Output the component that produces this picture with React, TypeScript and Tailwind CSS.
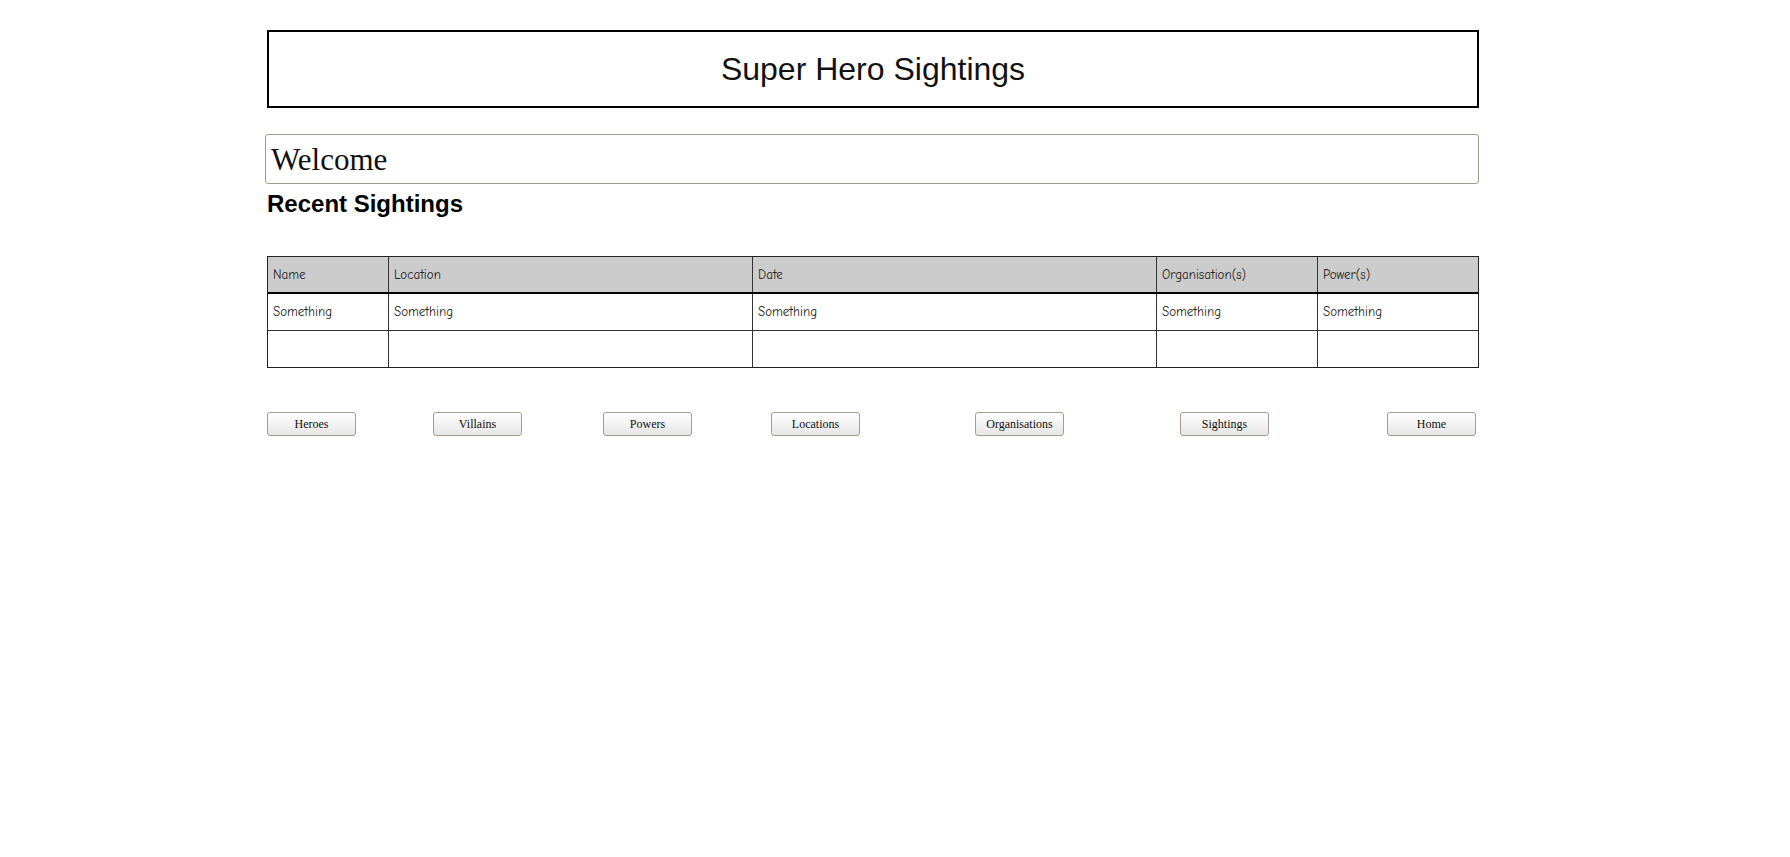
import React from 'react';

const columns = [
  { label: 'Name', width: 'w-[121px]' },
  { label: 'Location', width: 'w-[364px]' },
  { label: 'Date', width: 'w-[404px]' },
  { label: 'Organisation(s)', width: 'w-[161px]' },
  { label: 'Power(s)', width: 'flex-1' },
];

const navButtons = [
  { label: 'Heroes', ml: 'ml-0' },
  { label: 'Villains', ml: 'ml-[77px]' },
  { label: 'Powers', ml: 'ml-[81px]' },
  { label: 'Locations', ml: 'ml-[79px]' },
  { label: 'Organisations', ml: 'ml-[115px]' },
  { label: 'Sightings', ml: 'ml-[116px]' },
  { label: 'Home', ml: 'ml-[118px]' },
];

const sketchFont = "font-['Comic_Sans_MS','Comic_Neue','Open_Sans',sans-serif]";

function TableRow({ cells, header }: { cells: string[]; header?: boolean }) {
  return (
    <div
      className={`flex h-[37px] ${
        header ? 'bg-[#cccccc] border-b-2 border-black' : 'border-b border-[#333]'
      }`}
    >
      {columns.map((col, i) => (
        <div
          key={col.label}
          className={`${col.width} flex items-center pl-[5px] ${
            i < columns.length - 1 ? 'border-r border-[#333]' : ''
          }`}
        >
          <span className="text-[13px] text-[#222]">{cells[i]}</span>
        </div>
      ))}
    </div>
  );
}

export default function App() {
  return (
    <div className="min-h-screen bg-white">
      <div className="ml-[267px] w-[1212px] pt-[30px]">
        <div className="h-[78px] border-2 border-black flex items-center justify-center">
          <h1 className="font-['Liberation_Sans',Arial,sans-serif] text-[32px] text-[#111]">
            Super Hero Sightings
          </h1>
        </div>

        <div className="-ml-[2px] mt-[26px] h-[50px] border border-[#a89c8e] rounded-[3px] flex items-center pl-[5px]">
          <span className="font-['Liberation_Serif','Times_New_Roman',serif] text-[31px] text-[#111] leading-none">
            Welcome
          </span>
        </div>

        <h2 className="mt-[6px] font-['Liberation_Sans',Arial,sans-serif] font-bold text-[24px] leading-[28px] text-black">
          Recent Sightings
        </h2>

        <div className={`mt-[38px] border border-[#222] ${sketchFont}`}>
          <TableRow header cells={columns.map((c) => c.label)} />
          <TableRow cells={['Something', 'Something', 'Something', 'Something', 'Something']} />
          <div className="flex h-[36px]">
            {columns.map((col, i) => (
              <div
                key={col.label}
                className={`${col.width} ${i < columns.length - 1 ? 'border-r border-[#333]' : ''}`}
              />
            ))}
          </div>
        </div>

        <div className="mt-[44px] flex">
          {navButtons.map((b) => (
            <button
              key={b.label}
              className={`${b.ml} w-[89px] h-[24px] rounded-[3px] border border-[#a89c8e] bg-gradient-to-b from-white to-[#e6e6e6] font-['Liberation_Serif','Times_New_Roman',serif] text-[12px] text-[#111]`}
            >
              {b.label}
            </button>
          ))}
        </div>
      </div>
    </div>
  );
}
